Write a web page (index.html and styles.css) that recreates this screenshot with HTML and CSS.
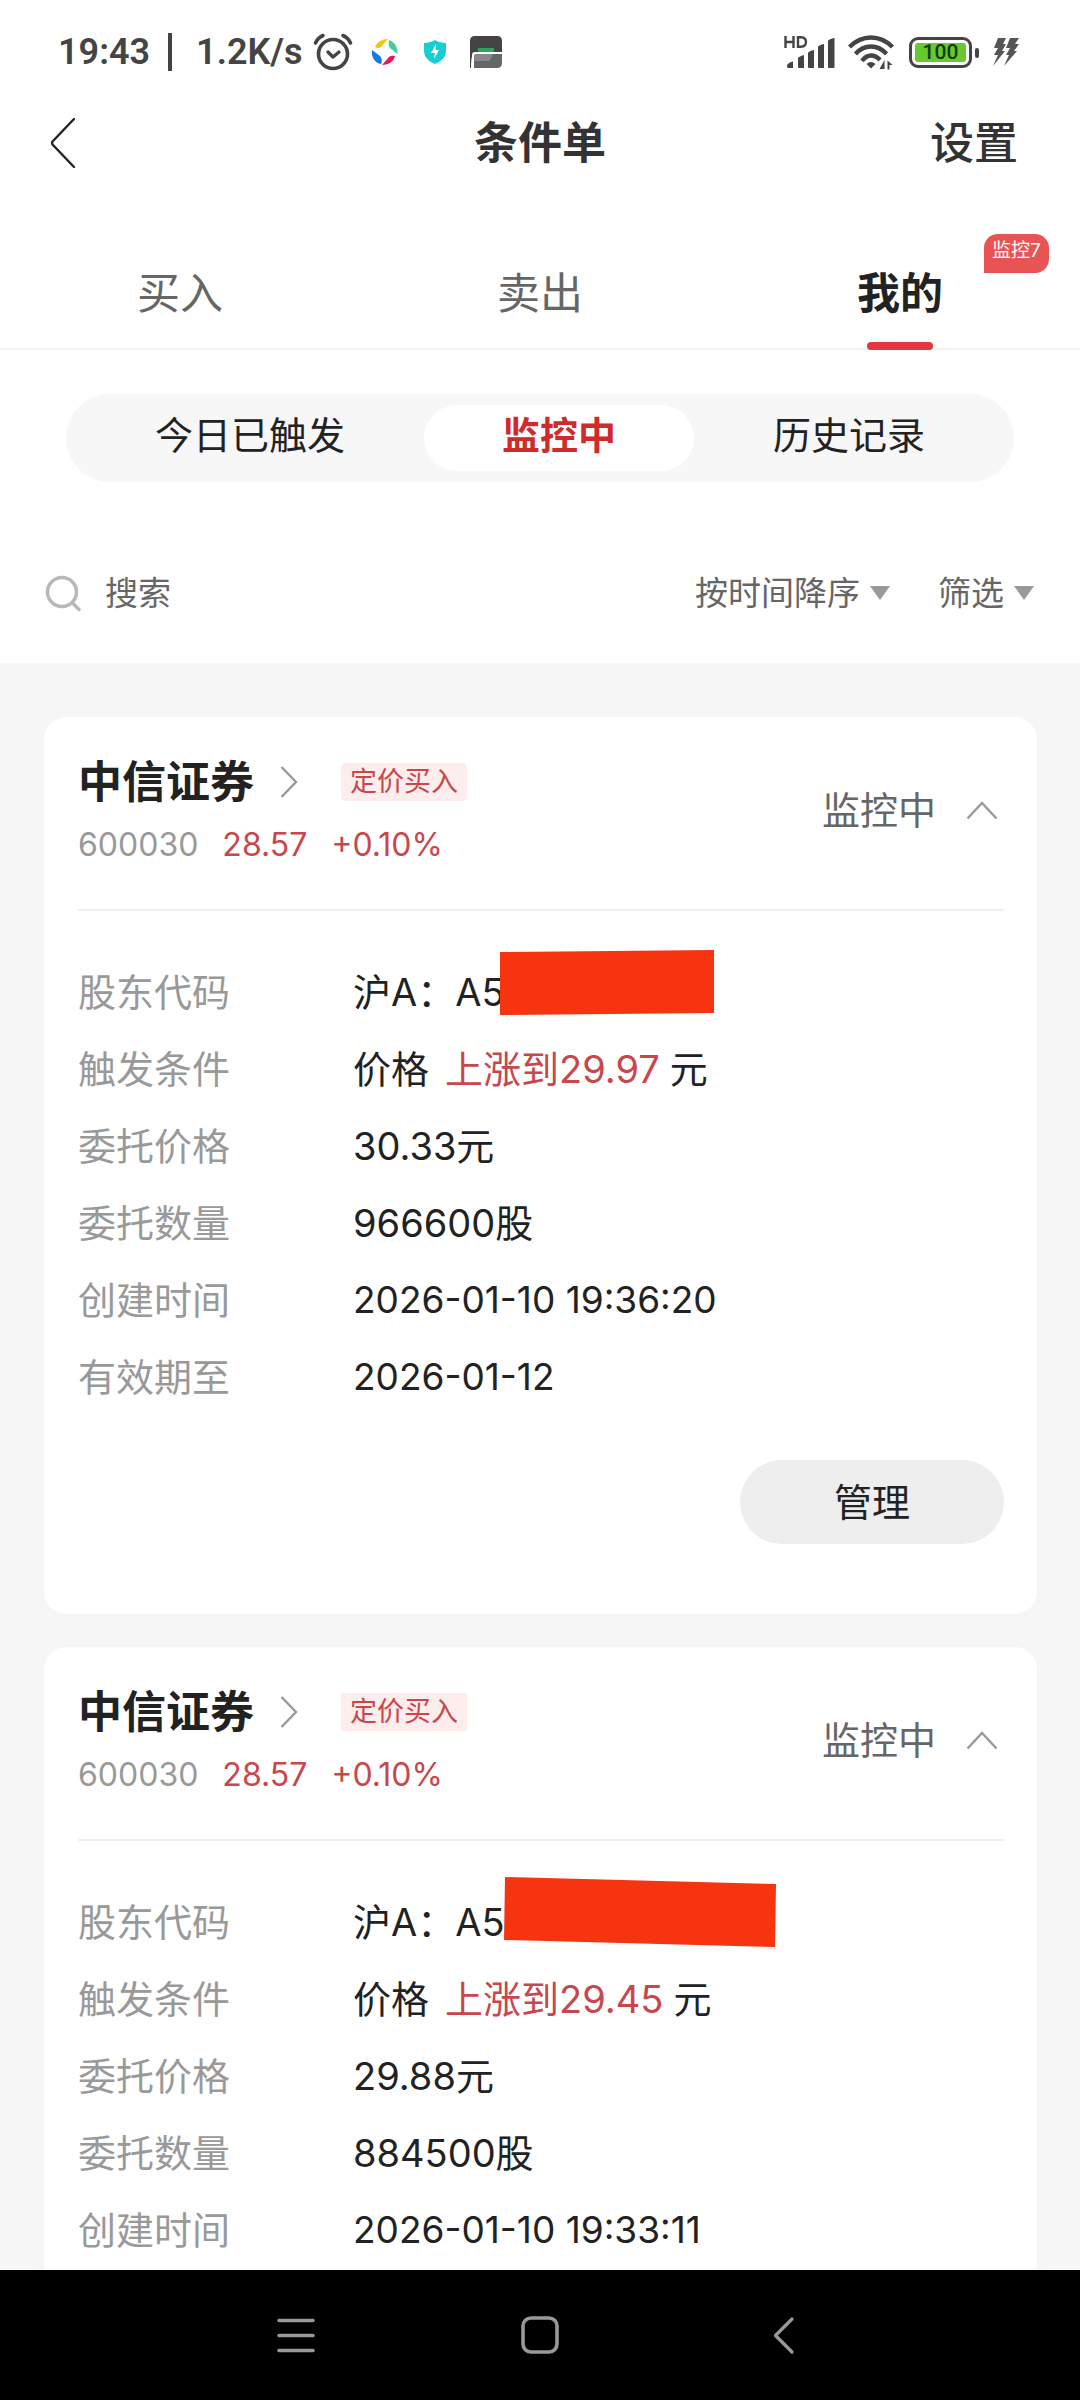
FILE: index.html
```html
<!DOCTYPE html>
<html lang="zh-CN">
<head>
<meta charset="utf-8">
<meta name="viewport" content="width=device-width">
<title>条件单</title>
<link rel="stylesheet" href="styles.css">
</head>
<body>
<div class="status-bar">
  <div class="status-left">
    <span class="clock">19:43</span>
    <span class="bar"></span>
    <span class="speed">1.2K/s</span>
    <svg class="alarm" width="40" height="38" viewBox="0 0 40 38" fill="none" stroke="#444" stroke-linecap="round" stroke-linejoin="round">
      <circle cx="20" cy="21" r="14.5" stroke-width="3.6"/>
      <path d="M15 19l5 5 6-5" stroke-width="3.4"/>
      <path d="M2.500 10C4 6.500 6.500 4 10 2.500M30 2.500C33.500 4 36 6.500 37.500 10" stroke-width="3.6"/>
    </svg>
    <svg class="pinwheel" width="28" height="28" viewBox="0 0 28 28">
      <path d="M4 9C6 4 11 1 17 1L10 9Q8 11 4 9z" fill="#f4c414"/>
      <path d="M18 2C24 4 27 10 26.500 16L19 10Q17 7 18 2z" fill="#3fcf9d"/>
      <path d="M24 18C23 23 18 27 11 27L18 19Q20 17 24 18z" fill="#e8175d"/>
      <path d="M1 12C0 19 4 25 10 26Q12 22 9 18z" fill="#1277e8"/>
    </svg>
    <svg class="shield" width="24" height="26" viewBox="0 0 24 26">
      <path d="M1 4Q8 3.500 12 1Q16 3.500 23 4V13Q22 21 12 25Q2 21 1 13z" fill="#16cfd2"/>
      <path d="M13 5L8 14H12L11 20L16 11H12.500z" fill="#fff"/>
    </svg>
    <svg class="wallet" width="32" height="34" viewBox="0 0 32 34">
      <path d="M0 33V6Q0 1 5 1H27Q32 1 32 6V19H4Q1 19 1 33z" fill="#444"/>
      <path d="M8 13H24V17H8z" fill="#2fa35a"/>
      <path d="M2 34V20Q2 17 5 17H32V29Q32 34 27 34z" fill="#fff"/>
      <path d="M4 33V22Q4 19 7 19H32V28Q32 33 27 33z" fill="#666"/>
      <path d="M4 26V22Q4 19 7 19H23L20 25Q19.500 26 18 26z" fill="#888"/>
    </svg>
  </div>
  <div class="status-right">
    <svg width="52" height="36" viewBox="0 0 52 36" fill="#444">
      <path d="M3 32Q3 29 9 27.500V34H4Q3 34 3 32zM14 24Q15 22.500 20 21V34H15Q14 34 14 33zM24 19Q25 17 30 16V34H25Q24 34 24 33zM34 13Q35 11 40 10V34H35Q34 34 34 33zM44 7Q45 5 50.500 4V33Q50.500 34 49.500 34H45Q44 34 44 33z"/>
      <path d="M1.500 2V14M1.500 8H9M9.500 2V14M14 3.200V12.800H17Q22 12.500 22 8T17 3.200z" fill="none" stroke="#444" stroke-width="2.400"/>
    </svg>
    <svg width="46" height="36" viewBox="0 0 46 36" fill="none" stroke="#444" stroke-width="4.400">
      <path d="M1.500 13Q11 3.500 23 3.500T44.500 13M7.500 20Q14 12.500 23 12.500T38.500 20M14 27Q18 21.500 23 21.500T32 26"/>
      <path d="M18.500 30Q23 26 27.500 30L23 34.500z" fill="#444" stroke="none"/>
      <path d="M36.500 26V35H31.500zM39.500 35.500V26.500L44.500 31H41.500V35.500z" fill="#444" stroke="none"/>
    </svg>
    <div class="battery"><span>100</span></div>
    <svg width="28" height="30" viewBox="0 0 28 30" fill="#555">
      <path d="M6 1H14L11 7H14L10 14H13L1 29L6 18H2L6 11H2z"/>
      <path d="M18 1H27L23 7H27L22 14H25L12 29L17 18H14L18 11H14z"/>
    </svg>
  </div>
</div>

<header class="title-bar">
  <button class="back" aria-label="返回"><svg width="26" height="52" viewBox="0 0 26 52" fill="none" stroke="#222" stroke-width="2.400" stroke-linecap="round" stroke-linejoin="round"><path d="M24 2L2.500 24.500Q1.500 26 2.500 27.500L24 50"/></svg></button>
  <h1>条件单</h1>
  <button class="settings">设置</button>
</header>

<nav class="tabs">
  <button>买入</button>
  <button>卖出</button>
  <button class="active">我的<span class="badge">监控7</span></button>
</nav>

<div class="segment">
  <button>今日已触发</button>
  <button class="active">监控中</button>
  <button>历史记录</button>
</div>

<div class="toolbar">
  <label class="search">
    <svg width="38" height="38" viewBox="0 0 38 38" fill="none" stroke="#b8b8b8" stroke-width="3.500" stroke-linecap="round"><circle cx="17" cy="18" r="14.500"/><path d="M27.500 29L34 35.500"/></svg>
    <input type="text" placeholder="搜索" aria-label="搜索">
  </label>
  <label class="picker"><select aria-label="排序"><option>按时间降序</option></select><svg width="20" height="14" viewBox="0 0 20 14"><path d="M0 0H20L10 14z" fill="#999"/></svg></label>
  <label class="picker"><select aria-label="筛选"><option>筛选</option></select><svg width="20" height="14" viewBox="0 0 20 14"><path d="M0 0H20L10 14z" fill="#999"/></svg></label>
</div>

<main class="list">
  <article class="card">
    <div class="card-head">
      <div class="stock">
        <div class="stock-name">
          <h2>中信证券</h2>
          <svg width="18" height="32" viewBox="0 0 18 32" fill="none" stroke="#999" stroke-width="2.400"><path d="M1.500 1L16 16 1.500 31"/></svg>
          <span class="tag">定价买入</span>
        </div>
        <div class="quote"><span class="code">600030</span><span>28.57</span><span>+0.10%</span></div>
      </div>
      <button class="state">监控中<svg width="32" height="20" viewBox="0 0 32 20" fill="none" stroke="#999" stroke-width="2.400"><path d="M1.500 18.500L16 3 30.500 18.500"/></svg></button>
    </div>
    <dl class="details">
      <dt>股东代码</dt>
      <dd>沪A：A5<svg class="mask mask-short" width="214" height="65" viewBox="0 0 214 65"><path d="M0 2L214 0V63L0 65z" fill="#f63510"/></svg></dd>
      <dt>触发条件</dt><dd>价格<em>上涨到29.97</em>元</dd>
      <dt>委托价格</dt><dd>30.33元</dd>
      <dt>委托数量</dt><dd>966600股</dd>
      <dt>创建时间</dt><dd class="date">2026-01-10 19:36:20</dd>
      <dt>有效期至</dt><dd class="date">2026-01-12</dd>
    </dl>
    <button class="manage">管理</button>
  </article>

  <article class="card">
    <div class="card-head">
      <div class="stock">
        <div class="stock-name">
          <h2>中信证券</h2>
          <svg width="18" height="32" viewBox="0 0 18 32" fill="none" stroke="#999" stroke-width="2.400"><path d="M1.500 1L16 16 1.500 31"/></svg>
          <span class="tag">定价买入</span>
        </div>
        <div class="quote"><span class="code">600030</span><span>28.57</span><span>+0.10%</span></div>
      </div>
      <button class="state">监控中<svg width="32" height="20" viewBox="0 0 32 20" fill="none" stroke="#999" stroke-width="2.400"><path d="M1.500 18.500L16 3 30.500 18.500"/></svg></button>
    </div>
    <dl class="details">
      <dt>股东代码</dt>
      <dd>沪A：A5<svg class="mask mask-long" width="272" height="70" viewBox="0 0 272 70"><path d="M1 0L272 7L271 70L0 63z" fill="#f63510"/></svg></dd>
      <dt>触发条件</dt><dd>价格<em>上涨到29.45</em>元</dd>
      <dt>委托价格</dt><dd>29.88元</dd>
      <dt>委托数量</dt><dd>884500股</dd>
      <dt>创建时间</dt><dd class="date">2026-01-10 19:33:11</dd>
    </dl>
  </article>
</main>

<footer class="system-nav">
  <button aria-label="菜单"><svg width="40" height="40" viewBox="0 0 40 40" stroke="#999" stroke-width="3.600" stroke-linecap="round"><path d="M3 5.500H37M3 20.500H37M3 35.500H37"/></svg></button>
  <button aria-label="主页"><svg width="40" height="40" viewBox="0 0 40 40" fill="none" stroke="#999" stroke-width="3.600"><rect x="3" y="3" width="34" height="34" rx="8"/></svg></button>
  <button aria-label="后退"><svg width="40" height="40" viewBox="0 0 40 40" fill="none" stroke="#999" stroke-width="3.200" stroke-linecap="round" stroke-linejoin="round"><path d="M28 4L11.500 20.500 28 37"/></svg></button>
</footer>
</body>
</html>
```

FILE: styles.css
```css
* {
  box-sizing: border-box;
}

body {
  display: flex;
  flex-direction: column;
  height: 100vh;
  margin: 0;
  overflow: hidden;
  background: #fff;
  color: #222;
  font: 38px/48px Inter, "Noto Sans CJK SC", sans-serif;
}

button,
input,
select {
  margin: 0;
  padding: 0;
  border: 0;
  background: none;
  color: inherit;
  font: inherit;
}

svg {
  display: block;
  flex: none;
}

h1,
h2,
dl,
dd {
  margin: 0;
}

/* Status bar */
.status-bar,
.status-left,
.status-right {
  display: flex;
  align-items: center;
}

.status-bar {
  flex: none;
  justify-content: space-between;
  height: 104px;
  padding: 0 60px 0 58px;
  color: #444;
  font: 600 36px/40px Roboto, sans-serif;
}

.bar {
  width: 4px;
  height: 38px;
  margin: 0 24px 0 18px;
  background: #444;
}

.alarm {
  margin-left: 11px;
}

.pinwheel {
  margin-left: 18px;
}

.shield {
  margin-left: 24px;
}

.wallet {
  margin-left: 23px;
}

.status-right {
  gap: 12px;
}

.battery {
  position: relative;
  width: 63px;
  height: 31px;
  margin: 0 8px 0 3px;
  padding: 3px;
  border: 3px solid #444;
  border-radius: 9px;
}

.battery::after {
  position: absolute;
  top: 8px;
  right: -10px;
  width: 4px;
  height: 10px;
  border-radius: 2px;
  background: #444;
  content: "";
}

.battery span {
  display: block;
  height: 19px;
  border-radius: 3px;
  background: #66c92e;
  color: #123a08;
  font: 500 21px/19px Roboto, sans-serif;
  text-align: center;
}

/* Title bar */
.title-bar {
  display: grid;
  flex: none;
  grid-template-columns: 1fr auto 1fr;
  align-items: center;
  height: 78px;
  margin-bottom: 54px;
  padding: 0 62px 0 50px;
  color: #333;
  font-size: 44px;
}

.title-bar h1 {
  padding-left: 12px;
  font-size: 44px;
  font-weight: 700;
}

.back {
  justify-self: start;
}

.settings {
  justify-self: end;
  font-weight: 500;
}

/* Tabs */
.tabs {
  display: grid;
  flex: none;
  grid-template-columns: repeat(3, 1fr);
  height: 114px;
  border-bottom: 2px solid #f3f3f3;
  color: #666;
  font-size: 43px;
}

.tabs button {
  position: relative;
  padding-top: 2px;
}

.tabs .active {
  color: #222;
  font-weight: 700;
}

.tabs .active::after {
  position: absolute;
  bottom: -2px;
  left: calc(50% - 33px);
  width: 66px;
  height: 8px;
  border-radius: 4px;
  background: #e1383f;
  content: "";
}

.badge {
  position: absolute;
  top: -2px;
  right: 31px;
  width: 65px;
  height: 39px;
  border-radius: 14px 14px 14px 0;
  background: #e85454;
  color: #fff;
  font-size: 19px;
  font-weight: 400;
  line-height: 34px;
}

/* Segmented switch */
.segment {
  display: flex;
  flex: none;
  align-items: center;
  justify-content: center;
  gap: 79px;
  height: 88px;
  margin: 44px 66px 41px;
  border-radius: 44px;
  background: #f7f7f7;
}

.segment button {
  padding-bottom: 6px;
}

.segment .active {
  width: 270px;
  height: 66px;
  border-radius: 33px;
  background: #fff;
  color: #cf2a2c;
  font-weight: 700;
}

/* Search and sorting */
.toolbar {
  display: flex;
  flex: none;
  align-items: center;
  gap: 48px;
  height: 140px;
  padding: 0 46px 0 45px;
  color: #666;
  font-size: 33px;
}

.search {
  display: flex;
  flex: 1;
  align-items: center;
  gap: 22px;
  min-width: 0;
}

.search input {
  width: 100%;
  min-width: 0;
}

.search input::placeholder {
  color: #666;
  opacity: 1;
}

.picker {
  display: flex;
  align-items: center;
  gap: 10px;
}

.picker select {
  appearance: none;
}

/* Order cards */
.list {
  display: flex;
  flex: 1;
  flex-direction: column;
  gap: 33px;
  min-height: 0;
  overflow: hidden;
  padding: 54px 43px 54px 44px;
  background: #f7f7f7;
}

.card {
  display: flex;
  flex: none;
  flex-direction: column;
  padding: 41px 33px 70px 34px;
  border-radius: 22px;
  background: #fff;
  box-shadow: 0 0 16px rgba(0, 0, 0, 0.02);
}

.card-head {
  display: flex;
  justify-content: space-between;
  padding-bottom: 40px;
  border-bottom: 2px solid #f0f0f0;
}

.stock-name {
  display: flex;
  align-items: center;
  height: 48px;
  margin-bottom: 15px;
}

.stock-name h2 {
  margin-right: 26px;
  font-size: 44px;
  font-weight: 700;
}

.tag {
  margin-left: 43px;
  padding: 0 9px;
  border-radius: 4px;
  background: #feeded;
  color: #c8474b;
  font-size: 27px;
  line-height: 38px;
}

.quote {
  display: flex;
  gap: 24px;
  color: #c8474b;
  font-size: 32px;
}

.code {
  color: #999;
}

.state {
  display: flex;
  align-items: center;
  gap: 30px;
  padding: 0 6px 8px 0;
  color: #666;
}

.details {
  display: grid;
  grid-template-columns: 275px 1fr;
  grid-auto-rows: 77px;
  align-items: center;
  margin-top: 42px;
}

.details dt {
  color: #999;
}

.details dd {
  position: relative;
}

.details .date {
  font-size: 37px;
}

.details em {
  margin: 0 10px 0 16px;
  color: #c8474b;
  font-style: normal;
}

/* Marks painted over the account number */
.mask {
  position: absolute;
}

.mask-short {
  top: -18px;
  left: 147px;
}

.mask-long {
  top: -21px;
  left: 151px;
}

.manage {
  align-self: flex-end;
  width: 264px;
  height: 84px;
  margin-top: 45px;
  border-radius: 42px;
  background: #eee;
}

/* System navigation */
.system-nav {
  display: flex;
  flex: none;
  align-items: center;
  justify-content: center;
  gap: 204px;
  height: 130px;
  background: #000;
}
```
